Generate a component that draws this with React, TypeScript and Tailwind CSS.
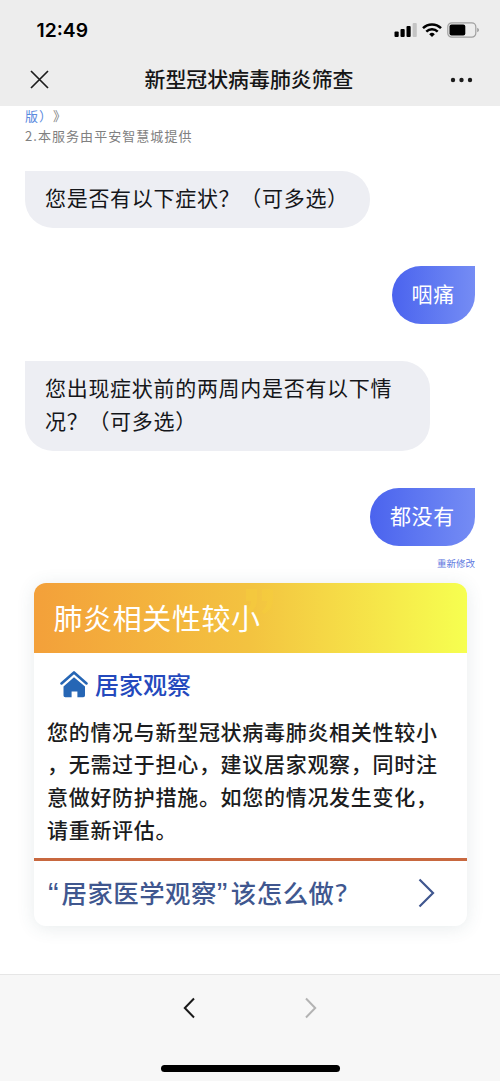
import { ReactNode } from 'react'

interface BubbleProps {
  children: ReactNode
}

function Question({ children }: BubbleProps) {
  return (
    <div className="w-fit max-w-[405px] rounded-[28px] rounded-tl-none bg-[#edeef3] pt-[10px] pb-[14.5px] pl-5 pr-[21px] text-[21px] leading-[32.5px] tracking-[0.7px] text-[#15161a]">
      {children}
    </div>
  )
}

function Answer({ children }: BubbleProps) {
  return (
    <div className="flex h-[58px] w-fit items-center self-end rounded-[29px] rounded-tr-none bg-linear-to-r from-[#4b63ee] to-[#758cf4] pb-[2px] pl-5 pr-5 text-[21px] tracking-[0.7px] text-white">
      {children}
    </div>
  )
}

function StatusBar() {
  return (
    <div className="flex h-[60px] items-center justify-between pl-[36.5px] pr-[20px]">
      <span className="pt-px font-[Inter] text-[19.3px] font-semibold text-black">12:49</span>
      <div className="flex items-center">
        <svg width="23" height="14" viewBox="0 0 23 14">
          <rect x="0.5" y="8.5" width="4.2" height="5.5" rx="1" />
          <rect x="6.5" y="6" width="4.2" height="8" rx="1" />
          <rect x="12.5" y="3" width="4.2" height="11" rx="1" />
          <rect x="18.6" y="0" width="4.2" height="14" rx="1" fill="#c4c4c4" />
        </svg>
        <svg className="ml-[5.5px]" width="20" height="14" viewBox="0 0 20 14" fill="none" stroke="#000" strokeWidth="2.5">
          <path d="M1 5.2a12.8 12.8 0 0 1 18 0" />
          <path d="M4.3 8.6a8.2 8.2 0 0 1 11.4 0" />
          <path d="M10 14l-2.8-2.8a4 4 0 0 1 5.6 0z" fill="#000" stroke="none" />
        </svg>
        <svg className="ml-[5px]" width="33" height="16" viewBox="0 0 33 16">
          <rect x="0.8" y="0.8" width="28" height="14.4" rx="4" fill="none" stroke="#a0a0a0" strokeWidth="1.2" />
          <rect x="2.5" y="2.5" width="15.8" height="11" rx="2" />
          <path d="M30.3 5.7v4.6q1.6-.8 1.6-2.3t-1.6-2.3z" fill="#909090" />
        </svg>
      </div>
    </div>
  )
}

function TitleBar() {
  return (
    <div className="flex h-[46px] items-center justify-between pb-[7px] pl-[30px] pr-[27px]">
      <svg width="19" height="19" viewBox="0 0 19 19" stroke="#1c1c1c" strokeWidth="1.7">
        <path d="M1 1l17 17M18 1L1 18" />
      </svg>
      <h1 className="pb-px pr-px text-[20.9px] font-medium text-[#161616]">新型冠状病毒肺炎筛查</h1>
      <svg width="23" height="6" viewBox="0 0 23 6" fill="#1c1c1c">
        <circle cx="3" cy="3" r="2.2" />
        <circle cx="11.5" cy="3" r="2.2" />
        <circle cx="20" cy="3" r="2.2" />
      </svg>
    </div>
  )
}

const advice = [
  '您的情况与新型冠状病毒肺炎相关性较小',
  '，无需过于担心，建议居家观察，同时注',
  '意做好防护措施。如您的情况发生变化，',
  '请重新评估。',
]

function ResultCard() {
  return (
    <section className="ml-[8.5px] mr-[8.5px] mt-[10.5px] h-[343px] overflow-hidden rounded-xl bg-white shadow-[0_2px_18px_rgba(60,90,100,0.12)]">
      <div className="relative flex h-[70px] items-center bg-linear-to-r from-[#f3a03a] via-[#f3c340] to-[#f6ff50] pl-5">
        <svg className="absolute left-[210px] top-[4px]" width="32" height="28" viewBox="0 0 32 28" fill="#f6cf3c" opacity="0.45">
          <path d="M2 2h11v10q0 10-9 15l-2-3q5-4 5-10H2z" />
          <path d="M18 2h11v10q0 10-9 15l-2-3q5-4 5-10h-5z" />
        </svg>
        <h2 className="relative text-[29px] tracking-[0.6px] text-white">肺炎相关性较小</h2>
      </div>
      <div className="flex h-[62px] items-center pl-[26px]">
        <svg width="28" height="28" viewBox="0 0 28 28" fill="#2666b5">
          <path d="M14 7.2L25 16.4V25.4q0 1.8-1.8 1.8H17.4v-5.7h-5.8v5.7H5.3q-1.8 0-1.8-1.8v-9z" />
          <path d="M1.5 13.4L14 2.4l12.5 11" fill="none" stroke="#2666b5" strokeWidth="2.6" strokeLinecap="round" strokeLinejoin="round" />
        </svg>
        <h3 className="ml-[7.5px] text-[24px] font-medium text-[#2449bd]">居家观察</h3>
      </div>
      <div className="h-[143.5px] pl-[13.5px] text-[21px] font-medium leading-[32.7px] tracking-[0.7px] text-[#1b1c20]">
        {advice.map((line) => (
          <p key={line} className="whitespace-nowrap">
            {line}
          </p>
        ))}
      </div>
      <div className="flex h-[67px] items-center justify-between border-t-[3px] border-[#c8683f] pl-[13.5px] pr-[32px] text-[#40578f]">
        <p className="flex pt-[1px] text-[25.4px] font-medium tracking-[0.5px]">
          <span className="w-[14.5px] pl-[1px] font-['Liberation_Sans'] text-[32px] leading-[42px]">“</span>
          居家医学观察
          <span className="w-[14px] font-['Liberation_Sans'] text-[32px] leading-[42px]">”</span>
          该怎么做
          <span className="pl-[1px] font-['Noto_Sans']">?</span>
        </p>
        <svg width="17" height="30" viewBox="0 0 17 30" fill="none" stroke="currentColor" strokeWidth="2.2">
          <path d="M1.5 1.5L15 15 1.5 28.5" />
        </svg>
      </div>
    </section>
  )
}

function BottomBar() {
  return (
    <footer className="flex h-[107px] flex-col items-center justify-between border-t border-[#e6e6e6] bg-[#f7f7f7] pb-[9px] pt-[22px]">
      <div className="flex gap-[110px]">
        <svg width="12" height="22" viewBox="0 0 12 22" fill="none" stroke="#1a1a1a" strokeWidth="2">
          <path d="M11 1.5L1.8 11 11 20.5" />
        </svg>
        <svg width="12" height="22" viewBox="0 0 12 22" fill="none" stroke="#b3b3b3" strokeWidth="2">
          <path d="M1 1.5L10.2 11 1 20.5" />
        </svg>
      </div>
      <div className="h-[7px] w-[179px] rounded-full bg-black" />
    </footer>
  )
}

function App() {
  return (
    <div
      lang="zh-CN"
      className="flex h-[1081px] w-[500px] flex-col overflow-hidden bg-white font-['Noto_Sans_CJK_SC',sans-serif] [text-spacing-trim:space-all]"
    >
      <header className="h-[106px] bg-[#ededed]">
        <StatusBar />
        <TitleBar />
      </header>
      <main className="flex flex-1 flex-col px-[25px]">
        <div className="text-[13px] leading-5 tracking-[1.05px] text-[#808080]">
          <p>
            <span className="text-[#5b8ade]">版）</span>》
          </p>
          <p>2.本服务由平安智慧城提供</p>
        </div>
        <div className="mt-[25px] flex flex-col gap-[37.5px]">
          <Question>您是否有以下症状？（可多选）</Question>
          <Answer>咽痛</Answer>
          <Question>您出现症状前的两周内是否有以下情况？（可多选）</Question>
          <Answer>都没有</Answer>
        </div>
        <button className="mt-[9px] self-end text-[9.5px] leading-[17px] text-[#6078e0]">重新修改</button>
        <ResultCard />
      </main>
      <BottomBar />
    </div>
  )
}

export default App
